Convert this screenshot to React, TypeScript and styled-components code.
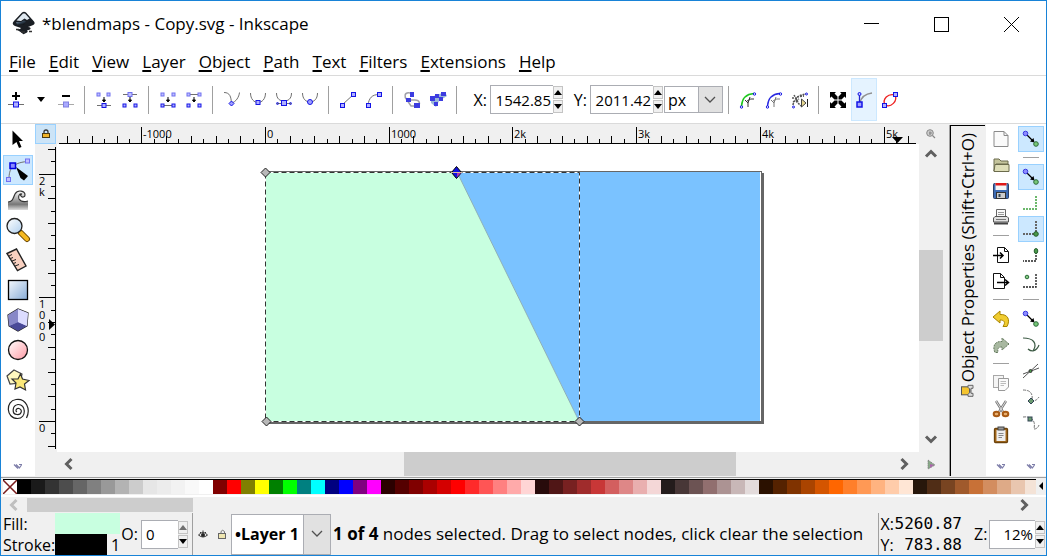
import React from "react";
import styled, { createGlobalStyle, css } from "styled-components";

const Global = createGlobalStyle`
  *, *::before, *::after { box-sizing: border-box; }
  html, body, #root { height: 100%; }
  body { margin: 0; overflow: hidden; background: #fff; color: #000; font: 17px/22px "Open Sans", "Noto Sans", sans-serif; }
  button, input, select { font: inherit; color: inherit; border-radius: 0; }
  button { padding: 0; border: 0; background: none; display: flex; align-items: center; justify-content: center; flex: none; }
  svg { display: block; flex: none; overflow: visible; }
`;

/* ---------- frame ---------- */
const Window = styled.div`
  min-height: 100vh;
  display: flex;
  flex-direction: column;
  border: 1px solid #1883d7;
  background: #fff;
`;
const Defs = styled.svg`
  position: absolute;
  width: 0;
  height: 0;
`;
const TitleBar = styled.header`
  display: flex;
  align-items: center;
  height: 46px;
  padding: 0 12px 0 11px;
`;
const Title = styled.h1`
  flex: 1;
  margin: 0 0 0 6px;
  font-size: 17px;
  font-weight: 400;
  white-space: nowrap;
`;
const WindowControl = styled.button`
  width: 46px;
  height: 30px;
  margin-left: 24px;
`;
const MenuBar = styled.nav`
  display: flex;
  align-items: center;
  gap: 13px;
  height: 28px;
  padding: 2px 8px 0;
`;
const MenuItem = styled.button`
  u { text-underline-offset: 2px; text-decoration-thickness: 2px; text-decoration-skip-ink: none; }
`;
const ToolBar = styled.div`
  display: flex;
  align-items: center;
  height: 49px;
  padding: 0 2px;
  border-top: 1px solid #dadada;
  border-bottom: 1px solid #dadada;
`;
const active = css`
  background: #cce8ff;
  box-shadow: inset 0 0 0 1px #99d1ff;
`;
const ToolButton = styled.button<{ $w?: number; $on?: boolean }>`
  width: ${(p) => p.$w ?? 26}px;
  height: 43px;
  ${(p) => p.$on && css`background: #e5f3ff; box-shadow: inset 0 0 0 1px #cce8ff;`}
`;
const Divider = styled.span`
  flex: none;
  width: 1px;
  height: 28px;
  margin: 0 6px 0 5px;
  background: #a0a0a0;
`;
const FieldLabel = styled.label<{ $w: number }>`
  width: ${(p) => p.$w}px;
  padding-right: 3px;
  text-align: right;
  font-size: 16px;
`;
const NumberField = styled.input<{ $w: number }>`
  width: ${(p) => p.$w}px;
  height: 29px;
  padding: 0 2px 0 4px;
  border: 1px solid #abadb3;
  border-right: 0;
  background: #fff;
  font-size: 15px;
  text-align: ${(p) => (p.$w > 40 ? "right" : "left")};
  outline: none;
`;
const Spin = styled.span`
  display: flex;
  flex-direction: column;
  gap: 1px;
  width: 10px;
  height: 27px;
  margin-right: 1px;
`;
const SpinButton = styled.button`
  flex: 1;
  width: 10px;
  background: #f0f0f0;
  border: 1px solid #c4c4c4;
`;
const SelectBox = styled.span<{ $w: number; $h: number; $arrow: number; $bold?: boolean }>`
  display: grid;
  grid-template-columns: 1fr ${(p) => p.$arrow}px;
  flex: none;
  width: ${(p) => p.$w}px;
  height: ${(p) => p.$h}px;
  border: 1px solid #abadb3;
  background: linear-gradient(90deg, #fff calc(100% - ${(p) => p.$arrow}px), #abadb3 0, #abadb3 calc(100% - ${(p) => p.$arrow - 1}px), #e1e1e1 0);
  align-items: center;
  select {
    grid-area: 1 / 1 / 2 / 3;
    width: 100%;
    height: 100%;
    padding: 0 0 0 3px;
    border: 0;
    background: none;
    appearance: none;
    outline: none;
    font-size: 16px;
    font-weight: ${(p) => (p.$bold ? 700 : 400)};
  }
  svg { grid-area: 1 / 2; justify-self: center; pointer-events: none; }
`;

/* ---------- work area ---------- */
const Work = styled.main`
  flex: 1;
  display: flex;
  min-height: 0;
  background: #f0f0f0;
`;
const ToolBox = styled.div`
  display: flex;
  flex-direction: column;
  align-items: center;
  width: 34px;
  margin-bottom: 1px;
  padding-top: 1px;
  background: #fff;
`;
const BoxButton = styled.button<{ $on?: boolean }>`
  width: 30px;
  height: 30px;
  ${(p) => p.$on && active}
`;
const More = styled.button`
  width: 24px;
  height: 20px;
  margin-top: auto;
  color: #7c7ca8;
`;
const Editor = styled.section`
  flex: 1;
  display: grid;
  grid-template: 20px minmax(0, 1fr) 25px / 22px minmax(0, 1fr) 24px;
  min-width: 0;
`;
const GuideLock = styled.button`
  width: 21px;
  background: #cce4f7;
  box-shadow: inset 0 0 0 1px #99d1ff;
`;
const Ruler = styled.svg`
  width: 100%;
  height: 100%;
  overflow: hidden;
  font: 11px "Open Sans", sans-serif;
`;
const Canvas = styled.svg`
  width: 100%;
  height: 100%;
  overflow: hidden;
  background: #fff;
`;
const ScrollBar = styled.div<{ $vertical?: boolean }>`
  display: flex;
  flex-direction: ${(p) => (p.$vertical ? "column" : "row")};
  align-items: stretch;
  color: #606060;
  padding: ${(p) => (p.$vertical ? "0 0 3px" : "0 3px 1px 0")};
`;
const ScrollArrow = styled.button<{ $h?: number }>`
  width: 24px;
  height: ${(p) => p.$h ?? 24}px;
  &:disabled { width: 26px; color: #bfbfbf; }
`;
const Track = styled.span<{ $grow: number }>`
  flex: ${(p) => p.$grow} 1 0;
`;
const Thumb = styled.span<{ $grow: number }>`
  flex: ${(p) => p.$grow} 1 0;
  background: #cdcdcd;
`;
const Corner = styled.button`
  width: 24px;
`;
const Dock = styled.aside`
  display: flex;
  flex-direction: column;
  align-items: center;
  width: 35px;
  margin: 1px 1px 1px 7px;
  padding-top: 7px;
  border-left: 1px solid #000;
  border-top: 1px solid #000;
  box-shadow: -1px 0 #a0a0a0;
`;
const DockTab = styled.button`
  flex-direction: row;
  gap: 2px;
  writing-mode: vertical-rl;
  transform: rotate(180deg);
  white-space: nowrap;
`;
const Side = styled.div`
  display: flex;
  flex-direction: column;
  align-items: center;
  width: 30px;
  padding-top: 2px;
  margin-bottom: 1px;
  background: #fff;
`;
const SideButton = styled.button<{ $on?: boolean }>`
  width: 26px;
  height: 26px;
  ${(p) => p.$on && active}
`;
const SideRule = styled.span`
  flex: none;
  width: 16px;
  height: 1px;
  margin: 5px 0 6px;
  background: #a0a0a0;
`;

/* ---------- bottom ---------- */
const Palette = styled.div`
  display: flex;
  align-items: center;
  height: 18px;
  padding: 0 0 1px 2px;
  border-top: 1px solid #a0a0a0;
  background: #f0f0f0;
`;
const Swatches = styled.div`
  flex: 1;
  display: flex;
  min-width: 0;
  overflow: hidden;
  border-top: 1px solid #000;
  margin-right: 2px;
`;
const Swatch = styled.button<{ $color: string }>`
  width: 14px;
  height: 14px;
  background: ${(p) => p.$color};
`;
const PaletteScroll = styled.div`
  display: flex;
  align-items: center;
  height: 18px;
  padding: 0 10px 0 0;
  border-top: 2px solid #fff;
  background: #f0f0f0;
  color: #606060;
`;
const PaletteThumb = styled.span`
  width: 16%;
  height: 14px;
  background: #cdcdcd;
`;
const StatusBar = styled.footer`
  display: flex;
  align-items: center;
  height: 42px;
  background: #f0f0f0;
`;
const StyleGrid = styled.div`
  display: grid;
  grid-template: 21px 21px / 52px 65px;
  align-items: center;
  padding-left: 2px;
  font-size: 16px;
  line-height: 20px;
`;
const FillChip = styled.button`
  align-self: stretch;
  background: #c8ffe0;
`;
const StrokeChip = styled.button`
  justify-content: flex-start;
  align-self: stretch;
  padding-left: 56px;
  background: linear-gradient(90deg, #000 52px, #f0f0f0 0);
`;
const StatusRule = styled.span`
  flex: none;
  align-self: stretch;
  width: 1px;
  margin-left: 3px;
  background: #a0a0a0;
`;
const SmallButton = styled.button`
  width: 19px;
  height: 24px;
`;
const Message = styled.p`
  flex: 1;
  margin: 0 0 0 2px;
  min-width: 0;
  white-space: nowrap;
  overflow: hidden;
`;
const Coords = styled.dl`
  display: grid;
  grid-template: 21px 21px / 14px auto;
  align-items: center;
  margin: 0 12px 0 2px;
  font-size: 16px;
  line-height: 20px;
  dd { margin: 0; text-align: right; font: 16px/20px "DejaVu Sans Mono", monospace; }
`;

/* ---------- icon pieces ---------- */
const B = "#1414e6";
const Sq = ({ x, y, s = 4, pale }: { x: number; y: number; s?: number; pale?: boolean }) => (
  <rect x={x - s / 2} y={y - s / 2} width={s} height={s} fill={pale ? "#c0c0ff" : "#b0b0ff"} stroke={pale ? "#7070f0" : B} />
);
const Ico = ({ children }: { children: React.ReactNode }) => (
  <svg width="22" height="22" viewBox="0 0 22 22" fill="none" aria-hidden="true">{children}</svg>
);
const Arrow = ({ up, color = "#000" }: { up?: boolean; color?: string }) => (
  <svg width="8" height="5" viewBox="0 0 8 5" aria-hidden="true"><path d={up ? "M0 5 4 0 8 5Z" : "M0 0 8 0 4 5Z"} fill={color} /></svg>
);
const Chevron = ({ d }: { d: "l" | "r" | "u" | "d" }) => (
  <svg width="14" height="14" viewBox="0 0 14 14" fill="none" stroke="currentColor" strokeWidth="3" aria-hidden="true">
    <path d={{ l: "M9.5 2 4.5 7 9.5 12", r: "M4.5 2 9.5 7 4.5 12", u: "M2 9.500 7 4.500 12 9.500", d: "M2 4.500 7 9.500 12 4.500" }[d]} />
  </svg>
);
const Drop = () => (
  <svg width="12" height="8" viewBox="0 0 12 8" fill="none" stroke="#505050" strokeWidth="1.300" aria-hidden="true"><path d="M1 1 6 6 11 1" /></svg>
);
const MoreIcon = () => (
  <svg width="8" height="5" viewBox="0 0 8 5" fill="none" stroke="currentColor" strokeWidth="1.200" aria-hidden="true"><path d="M0 0.500 4 4.500M2 0.500 5 3.500M5 0.500H8M7.500 1 5 4.500" /></svg>
);
const Spinner = ({ name, top }: { name: string; top?: string }) => (
  <Spin>
    <SpinButton aria-label={`Increase ${name}`}><Arrow up color={top} /></SpinButton>
    <SpinButton aria-label={`Decrease ${name}`}><Arrow /></SpinButton>
  </Spin>
);

const G = "#707070";
const down = <path d="M11 8V11M9.500 11H12.500L11 13Z" stroke="#000" fill="#000" strokeWidth="1" />;
const icons: Record<string, React.ReactNode> = {
  insert: <><path d="M3 15.500H19" stroke={G} /><path d="M11 3V11M7 7H15" stroke="#000" strokeWidth="2" /><Sq x={11} y={15.5} s={5} /></>,
  remove: <><path d="M3 15.500H19" stroke="#aaa" /><path d="M7 7H15" stroke="#000" strokeWidth="2" /><rect x="8.500" y="13" width="5" height="5" fill="#aaf" stroke="#8080e0" /></>,
  join: <><path d="M4 16.500H18" stroke={G} /><Sq x={5.5} y={5.5} s={3} pale /><Sq x={15.5} y={5.5} s={3} pale />{down}<Sq x={11} y={16.5} /></>,
  brk: <><path d="M4 5.500H18" stroke={G} /><Sq x={11} y={5.5} pale />{down}<Sq x={5.5} y={16.5} s={3} /><Sq x={16.5} y={16.5} s={3} /></>,
  joinSeg: <><Sq x={5.5} y={5.5} s={3} pale /><Sq x={16.5} y={5.5} s={3} pale />{down}<path d="M6 16.500H16" stroke={G} /><Sq x={5.5} y={16.5} s={3} /><Sq x={16.5} y={16.5} s={3} /></>,
  delSeg: <><path d="M6 5.500H16" stroke={G} /><Sq x={5.5} y={5.5} s={3} pale /><Sq x={16.5} y={5.5} s={3} pale />{down}<Sq x={5.5} y={16.5} s={3} /><Sq x={16.5} y={16.5} s={3} /></>,
  cusp: <><path d="M3 3.500C9 3.500 10 8 10.500 14C15 13 18 8 18.500 3.500" stroke={G} /><path d="M10.500 12 13 14.500 10.500 17 8 14.500Z" fill="#a0a0ff" stroke={B} /></>,
  smooth: <><path d="M3.500 4C3.500 10 7 13.500 11 13.500S18.500 10 18.500 4" stroke={G} /><Sq x={11} y={13.5} /></>,
  symm: <><path d="M3.500 4C3.500 10 7 12 11 12S18.500 10 18.500 4M4 14.500H18" stroke={G} /><Sq x={11} y={14} s={5} /><circle cx="4.500" cy="14.500" r="1" stroke={B} /><circle cx="17.500" cy="14.500" r="1" stroke={B} /></>,
  auto: <><path d="M3.500 4C3.500 10 7 13 11 13S18.500 10 18.500 4" stroke={G} /><circle cx="11" cy="13" r="2.500" fill="#a0a0ff" stroke={B} /></>,
  line: <><path d="M5 16 17 5" stroke={G} /><Sq x={5.5} y={16.5} /><Sq x={16.5} y={5.5} /></>,
  curve: <><path d="M5 16C6 9 9 5.500 16 5.500" stroke={G} /><Sq x={5.5} y={16.5} /><Sq x={16.5} y={5.5} /></>,
  objPath: <><path d="M9 4C3 3 3 8 6 11L10 17H16C20 16 19 11 14 11H9" stroke="#a0a0a8" strokeWidth="1.500" /><path d="M9 3H13V8H9ZM5 9H10V13H5ZM13 14H19V19H13Z" fill="#3c3ce0" /></>,
  strokePath: <><path d="M4 8 18 3 20 7 12 12 9 18 4 14Z" fill="#9ab8d8" /><path d="M3 7H8V12H3ZM8 5H12V9H8ZM14 3H19V7H14ZM7 13H11V17H7ZM12 8H16V12H12Z" fill="#3c3ce0" /></>,
  lpeEdit: <><path d="M4.500 17C5 10 9 5 17 4.500" stroke="#1ec81e" strokeWidth="1.600" /><path d="M8 11 11 14V18M11 14 13 8M10 12Q14 9 17 10" stroke="#333" /><circle cx="4.500" cy="18" r="1.200" stroke={B} /><circle cx="17.500" cy="5" r="1.200" stroke={B} /></>,
  mask: <><path d="M4.500 17C5 10 9 5 17 4.500" stroke="#2a2ae0" strokeWidth="1.400" /><path d="M8 11 11 14V18M11 14 13 8M10 12Q14 9 17 10" stroke="#777" /><circle cx="4.500" cy="18" r="1.200" stroke={B} /><circle cx="17.500" cy="5" r="1.200" stroke={B} /></>,
  lpe: <><path d="M4 16C5 10 9 6 17 5M3 9H9M5 6 9 13M8 8 15 7M7 12 12 17M4 13 10 10" stroke="#555" strokeDasharray="2 1" strokeWidth="1.500" /><path d="M12.500 10 17 14 12.500 18Z" fill="#e8d890" stroke="#444" /><path d="M18.500 10V18" stroke="#222" /><circle cx="4.500" cy="18" r="1" stroke={B} /><circle cx="17.500" cy="5" r="1" stroke={B} /></>,
  transform: <path d="M3 3H9L7.500 4.500 10.500 7.500V10.500H7.500L4.500 7.500 3 9ZM19 3H13L14.500 4.500 11.500 7.500V10.500H14.500L17.500 7.500 19 9ZM3 19H9L7.500 17.500 10.500 14.500V11.500H7.500L4.500 14.500 3 13ZM19 19H13L14.500 17.500 11.500 14.500V11.500H14.500L17.500 14.500 19 13Z" fill="#000" />,
  handles: <><path d="M7 14C8 9 11 5 19 4" stroke="#909090" strokeWidth="1.300" /><path d="M6.500 6V13" stroke="#2222cc" strokeWidth="1.300" /><circle cx="6.500" cy="5" r="1.500" stroke={B} fill="#c0c0ff" /><rect x="4" y="13" width="5" height="5" fill="#a0a0ff" stroke={B} strokeWidth="1.500" /></>,
  outline: <><path d="M6 16C3 10 9 4 16 6C19 12 12 19 6 16Z" stroke="#e22" strokeWidth="1.300" /><Sq x={5.5} y={16.5} /><Sq x={16.5} y={5.5} /></>,

  select: <path d="M5.500 1.500V16L9.500 13 12 19 14.500 18 12 12H16Z" fill="#000" />,
  node: <><path d="M2 20C2 10 5 4 20 2.500" stroke={G} /><path d="M9 8 21 17 17 21.500 13.500 19Z" fill="#000" /><rect x="3" y="4" width="5.500" height="5.500" fill="#8a8aff" stroke="#0000e0" strokeWidth="1.500" /><Sq x={1.5} y={20.5} pale /><Sq x={20.5} y={2} pale /></>,
  tweak: <><path d="M1 13C6 13 6 9 8 5C11 0 18 2 18 6C18 8 15 9 14 7C13 6 14 5 15 5C12 4 11 8 12 10C14 13 18 13 21 12V21H1Z" fill="url(#wave)" /><path d="M1 13C6 13 6 9 8 5C11 0 18 2 18 6C18 8 15 9 14 7C13 6 14 5 15 5C12 4 11 8 12 10C14 13 18 13 21 12" stroke="#333" strokeWidth="1.200" /></>,
  zoom: <><path d="M14 14 20 20" stroke="#6a4600" strokeWidth="6" strokeLinecap="round" /><path d="M14 14 20 20" stroke="#f5b820" strokeWidth="4" strokeLinecap="round" /><circle cx="7.500" cy="7" r="7.500" fill="url(#glass)" stroke="#222" strokeWidth="1.300" /></>,
  measure: <><path d="M0 4.500 9.500 0 19 17 10.500 21.500Z" fill="#f8d0c0" stroke="#222" strokeWidth="1.400" /><path d="M2 7 5 5.500M3.500 9.500 6 8.500M5 12 9 10.500M6.500 14.500 9 13.500M8 17 12 15.500" stroke="#222" /></>,
  rect: <rect x="1.500" y="1.500" width="19" height="19" fill="url(#blue)" stroke="#000" strokeWidth="1.300" />,
  box: <><path d="M1 6 11 0 21 4 20 17 11 22 2 17Z" fill="#c8c8f4" stroke="#222" strokeWidth="1.200" /><path d="M1 6 11 0V13L2 17Z" fill="#8888c8" /><path d="M2 17 11 13 20 17 11 22Z" fill="#4a4a98" /><path d="M11 0 21 4 20 17 11 13Z" fill="#dcdcff" /></>,
  ellipse: <circle cx="11" cy="11" r="9.500" fill="url(#pink)" stroke="#111" strokeWidth="1.300" />,
  star: <><path d="M7 1 15 5 13 14 3 15 0 7Z" fill="#fff8c0" stroke="#444" strokeWidth="1.200" /><path d="M13.500 5 15.500 10 22 11.500 17.500 15 18.500 21 13 18 8 20 9 14 5 10 11 10Z" fill="#fbe878" stroke="#333" strokeWidth="1.200" /></>,
  spiral: <path d="M10 13C8 12 9 9 12 9.500C16 10.500 14.500 16 10 15.500C4.500 15 5 6.500 11 5.500C19 5 20 19 10.500 19.500C-1 19.500 -2 2 9 0.500C19 -1 24 10 19.500 19" stroke="#222" strokeWidth="1.200" />,

  newDoc: <><path d="M4 3.500H14L18 7.500V18.500H4Z" fill="#fafafa" stroke="#8a8a8a" /><path d="M14 3.500V7.500H18" stroke="#8a8a8a" /></>,
  open: <><path d="M4 17V5H9L11 7H18V10H6Z" fill="#c4c49c" stroke="#6b6b4c" /><path d="M5 10.500H19V17.500H4Z" fill="#dedeb8" stroke="#6b6b4c" /></>,
  save: <><rect x="3.500" y="3.500" width="15" height="15" rx="1" fill="#3d6bb3" stroke="#2a3f66" /><path d="M5.500 3H16.500V10H5.500Z" fill="#f5f5f5" /><path d="M5.500 3H16.500V5.500H5.500Z" fill="#e01818" /><rect x="6.500" y="12.500" width="9" height="6" fill="#ccc" stroke="#333" /><path d="M8.500 14V17H10.500V14Z" fill="#345" /></>,
  print: <><path d="M6.500 11V3.500H15.500V11" fill="#fafafa" stroke="#666" /><path d="M8 6.500H14M8 8.500H14" stroke="#999" /><path d="M3.500 16V12L5 10.500H17L18.500 12V16Z" fill="#e0e0e0" stroke="#555" /><path d="M4 17.500H18" stroke="#444" strokeWidth="2" /><path d="M6 13.500H16" stroke="#777" /></>,
  imp: <><path d="M7.500 3.500H14.500L18.500 7.500V18.500H7.500Z" fill="#fff" stroke="#111" /><path d="M14.500 3.500V7.500H18" stroke="#111" /><path d="M3 11.500H13M10 8.500 13 11.500 10 14.500" stroke="#000" strokeWidth="1.500" /></>,
  exp: <><path d="M3.500 3.500H10.500L14.500 7.500V18.500H3.500Z" fill="#fff" stroke="#111" /><path d="M10.500 3.500V7.500H14" stroke="#111" /><path d="M7 12.500H18M15 9.500 18.500 12.500 15 15.500" stroke="#000" strokeWidth="1.500" /></>,
  undo: <path d="M3 9 10 3V6.500C18 6 20.500 12 17 18.500H13C16 14 14 12 10 12V15Z" fill="#f0cc30" stroke="#a88400" />,
  redo: <path d="M19 10 12 4V7.500C5 7 2 12 5 18.500H8C7 14 9 13 12 13V16Z" fill="#a8b8a0" stroke="#63785c" strokeDasharray="2 1" />,
  copy: <><rect x="3.500" y="3.500" width="10" height="12" fill="#f5f5f5" stroke="#a8a8a8" /><path d="M8.500 6.500H18.500V15L15 18.500H8.500Z" fill="#fafafa" stroke="#999" /><path d="M10.500 9.500H16M10.500 11.500H16M10.500 13.500H14" stroke="#bbb" /></>,
  cut: <><path d="M6 3 13 14M16 3 9 14" stroke="#777" strokeWidth="2.400" /><path d="M6 3 13 14M16 3 9 14" stroke="#ddd" /><ellipse cx="6.500" cy="16" rx="2.800" ry="2.300" fill="#e8b070" stroke="#a85a14" strokeWidth="2" /><ellipse cx="15.500" cy="16" rx="2.800" ry="2.300" fill="#e8b070" stroke="#a85a14" strokeWidth="2" /></>,
  paste: <><rect x="4.500" y="4.500" width="13" height="14" rx="1" fill="#a86c1e" stroke="#6c430c" strokeWidth="1.300" /><path d="M6.500 6H15.500V17H6.500Z" fill="#eee" /><rect x="8" y="3" width="6" height="3" fill="#999" stroke="#444" /><path d="M8.500 9.500H13.500M8.500 11.500H13.500M8.500 13.500H12" stroke="#888" /></>,

  snap: <><path d="M7 7 13 13" stroke="#000" strokeWidth="1.300" /><path d="M14.500 14.500 10 13.500 13.500 10Z" fill="#000" /><circle cx="5.500" cy="5.500" r="2.300" fill="#8c8cff" stroke="#3a3ae0" /><circle cx="16" cy="16" r="2.300" fill="#78c878" stroke="#2c6a3a" /></>,
  bbox: <path d="M16 4V17H3" stroke="#6cb86c" strokeWidth="2" strokeDasharray="2 1" />,
  corner: <><path d="M16 3V16H3" stroke="#666" strokeWidth="2" strokeDasharray="2 1" /><circle cx="16" cy="16" r="2.300" fill="#4a9a4a" stroke="#245c2c" /></>,
  mid: <><path d="M16 5V17H3" stroke="#222" strokeWidth="1.400" strokeDasharray="2 1" /><ellipse cx="16" cy="7" rx="1.800" ry="2.500" fill="#4a9a4a" stroke="#245c2c" /></>,
  center: <><path d="M16 4V17H3" stroke="#222" strokeWidth="1.400" strokeDasharray="2 1" /><circle cx="7" cy="7" r="1.800" fill="#8c8" stroke="#286a35" /></>,
  path: <path d="M3 4C13 4 18 9 13 17C11 17 9 16 8 15M13 17C16 16 18 14 19 11" stroke="#3c5a44" strokeWidth="1.200" />,
  cross: <><path d="M3 18 18 4M3 14 19 8" stroke="#555" /><circle cx="10.500" cy="11" r="1.500" fill="#4a9a4a" stroke="#333" /></>,
  nodeCusp: <><path d="M3 4C11 4 13 8 12 15C15 15 17 14 19 11" stroke="#777" strokeDasharray="3 1" /><path d="M11 12 14 15 11 18 8 15Z" fill="#6a9a70" stroke="#345" /></>,
  nodeSmooth: <><path d="M3 5C11 4 16 8 14 17C16 17 18 16 19 13" stroke="#777" strokeDasharray="3 1" /><rect x="8" y="5" width="4" height="4" fill="#6a9a70" stroke="#345" /></>,
};

const toolRow: (string | 0 | 1)[] = ["insert", 1, "remove", 0, "join", "brk", 0, "joinSeg", "delSeg", 0, "cusp", "smooth", "symm", "auto", 0, "line", "curve", 0, "objPath", "strokePath", 0];
const toolRow2: (string | 0)[] = [0, "lpeEdit", "mask", "lpe", 0, "transform", "handles", "outline"];
const boxRow = ["select", "node", "tweak", "zoom", "measure", "rect", "box", "ellipse", "star", "spiral"];
const cmdRow = ["newDoc", "open", "save", "print", 0, "imp", "exp", 0, "undo", "redo", 0, "copy", "cut", "paste"];
const snapRow: [string, boolean][] = [["snap", true], ["", false], ["snap", true], ["bbox", false], ["corner", true], ["mid", false], ["center", false], ["", false], ["snap", false], ["path", false], ["cross", false], ["nodeCusp", false], ["nodeSmooth", false]];
const menus = ["File", "Edit", "View", "Layer", "Object", "Path", "Text", "Filters", "Extensions", "Help"];

const colors = (
  "000000 1a1a1a 333333 4d4d4d 666666 808080 999999 b3b3b3 cccccc e6e6e6 ececec f2f2f2 f9f9f9 ffffff " +
  "800000 ff0000 808000 ffff00 008000 00ff00 008080 00ffff 000080 0000ff 800080 ff00ff " +
  "2b0000 550000 800000 aa0000 d40000 ff0000 ff2a2a ff5555 ff8080 ffaaaa ffd5d5 " +
  "280b0b 501616 782121 a02c2c c83737 d35f5f de8787 e9afaf f4d7d7 " +
  "241c1c 483737 6c5353 916f6f ac9393 c8b7b7 e3dbdb " +
  "2b1100 552200 803300 aa4400 d45500 ff6600 ff7f2a ff9955 ffb380 ffccaa ffe6d5 " +
  "28170b 502d16 784421 a05a2c c87137 d38d5f deaa87 e9c6af f4e3d7"
).split(" ");

/* One tick is a tenth of 1000 user units. */
const STEP = 12.37;
const ORIGIN_X = 208;
const ORIGIN_Y = 277;

function HorizontalRuler() {
  const ticks = [];
  for (let i = -16; i <= 52; i++) {
    const x = Math.round(ORIGIN_X + i * STEP) + 0.5;
    const top = i % 10 === 0 ? 3 : i % 2 === 0 ? 12 : 15;
    ticks.push(<path key={i} d={`M${x} ${top}V19`} />);
  }
  const labels: [number, string][] = [[-10, "-1000"], [0, "0"], [10, "1000"], [20, "2k"], [30, "3k"], [40, "4k"], [50, "5k"]];
  return (
    <Ruler aria-label="Horizontal ruler">
      <g stroke="#000">{ticks}<path d="M2 19.500H859" /></g>
      {labels.map(([i, t]) => <text key={t} x={Math.round(ORIGIN_X + i * STEP) + 2} y="14">{t}</text>)}
      <path d="M835 13H846L840.500 19Z" fill="#000" />
    </Ruler>
  );
}

function VerticalRuler() {
  const ticks = [];
  for (let i = -2; i <= 22; i++) {
    const y = Math.round(ORIGIN_Y - i * STEP) + 0.5;
    const left = i % 10 === 0 ? 4 : i % 2 === 0 ? 13 : 16;
    ticks.push(<path key={i} d={`M${left} ${y}H20`} />);
  }
  const labels: [string, number][] = [["2k", 41], ["1000", 164], ["0", 288]];
  return (
    <Ruler aria-label="Vertical ruler">
      <g stroke="#000">{ticks}<path d="M20.500 3V305" /></g>
      {labels.map(([t, y]) => (
        <text key={t}>{t.split("").map((c, i) => <tspan key={i} x="4" y={y + i * 11}>{c}</tspan>)}</text>
      ))}
      <path d="M14 175V186L20 180.500Z" fill="#000" />
    </Ruler>
  );
}

function Drawing() {
  return (
    <Canvas aria-label="Drawing canvas">
      <path d="M705 29H707V280H211V277H705Z" fill="#666" />
      <rect x="208.500" y="27.500" width="496" height="250" fill="#fff" stroke="#666" />
      <path d="M399 28H703V277H522Z" fill="#7ac2ff" />
      <path d="M209 28H400L522 277H209Z" fill="#c8ffe0" />
      <path d="M400 28 522 277" stroke="#8fb0b8" />
      <path d="M208.500 28.500H522.500V277.500H208.500Z" fill="none" stroke="#fff" />
      <path d="M208.500 28.500H522.500V277.500H208.500Z" fill="none" stroke="#333" strokeDasharray="5 3" />
      <g fill="#b8b8b8" stroke="#222">
        <path d="M208.500 24 213 28.500 208.500 33 204 28.500Z" />
        <path d="M209.500 273 214 277.500 209.500 282 205 277.500Z" />
        <path d="M522.500 273 527 277.500 522.500 282 518 277.500Z" />
      </g>
      <path d="M399.500 22.500 404.500 28.500 399.500 34.500 394.500 28.500Z" fill="#1010e0" stroke="#000" />
      <path d="M394 28.500H405" stroke="#d8b8a0" />
      <path d="M400 29H404L400 33Z" fill="#b030b0" />
    </Canvas>
  );
}

export default function App() {
  return (
    <Window>
      <Global />
      <Defs aria-hidden="true">
        <defs>
          <linearGradient id="wave" x2="0" y2="1"><stop stopColor="#fff" /><stop offset=".7" stopColor="#777" /><stop offset="1" stopColor="#ddd" /></linearGradient>
          <linearGradient id="glass" x2="1" y2="1"><stop stopColor="#fff" /><stop offset="1" stopColor="#b0d0ee" /></linearGradient>
          <linearGradient id="blue" x2="1" y2="1"><stop stopColor="#f4f8fc" /><stop offset="1" stopColor="#88acd6" /></linearGradient>
          <linearGradient id="pink" x2="1" y2="1"><stop stopColor="#fff" /><stop offset="1" stopColor="#ff9aa4" /></linearGradient>
          <linearGradient id="ink" x2="1" y2="1"><stop stopColor="#9ab" /><stop offset=".5" stopColor="#345" /><stop offset="1" stopColor="#000" /></linearGradient>
        </defs>
      </Defs>
      <TitleBar>
        <svg width="24" height="24" viewBox="0 0 24 24" aria-hidden="true">
          <path d="M10 0.500Q12 -1 14 0.500L22 9.500Q24 12 20 13.500L16 15Q20 15.500 18 17.500L15 18.500Q17 20 13 21.500Q11 23 10 21L7 19Q3 17.500 8 17L9 16 3 14Q-1 12 2 9Z" fill="#1a1e24" />
          <path d="M11 1.500H13L17.500 6.500 15 8 12.500 6.500 9 9 4.500 8.500Z" fill="#dfe8f0" />
          <path d="M4 10 9 10 12 8.500 14 9.500 12 12.500 5 12.500Z" fill="url(#ink)" />
          <path d="M4 17.500 7 17.500M17 19.500H20M9 20H13" stroke="#333" strokeWidth="1.500" />
        </svg>
        <Title>*blendmaps - Copy.svg - Inkscape</Title>
        <WindowControl aria-label="Minimize"><svg width="15" height="15" viewBox="0 0 15 15" stroke="#000"><path d="M0 6.500H15" /></svg></WindowControl>
        <WindowControl aria-label="Maximize"><svg width="15" height="15" viewBox="0 0 15 15" stroke="#000" fill="none"><rect x="0.500" y="0.500" width="14" height="14" /></svg></WindowControl>
        <WindowControl aria-label="Close"><svg width="15" height="15" viewBox="0 0 15 15" stroke="#000"><path d="M0 0 15 15M15 0 0 15" /></svg></WindowControl>
      </TitleBar>
      <MenuBar>
        {menus.map((m) => <MenuItem key={m}><span><u>{m[0]}</u>{m.slice(1)}</span></MenuItem>)}
      </MenuBar>
      <ToolBar role="toolbar">
        {toolRow.map((t, i) =>
          t === 0 ? <Divider key={i} /> : t === 1 ? <ToolButton key={i} $w={24} aria-label="More insert options"><Arrow /></ToolButton> : <ToolButton key={i} aria-label={t}><Ico>{icons[t]}</Ico></ToolButton>
        )}
        <FieldLabel $w={27} htmlFor="x">X:</FieldLabel>
        <NumberField id="x" $w={63} defaultValue="1542.85" />
        <Spinner name="X" />
        <FieldLabel $w={26} htmlFor="y">Y:</FieldLabel>
        <NumberField id="y" $w={63} defaultValue="2011.42" />
        <Spinner name="Y" />
        <SelectBox $w={59} $h={27} $arrow={24}>
          <select aria-label="Units" defaultValue="px"><option>px</option><option>mm</option></select>
          <Drop />
        </SelectBox>
        {toolRow2.map((t, i) => (t === 0 ? <Divider key={i} /> : <ToolButton key={i} aria-label={t} $on={t === "handles"}><Ico>{icons[t]}</Ico></ToolButton>))}
      </ToolBar>

      <Work>
        <ToolBox>
          {boxRow.map((t) => <BoxButton key={t} aria-label={t} $on={t === "node"}><Ico>{icons[t]}</Ico></BoxButton>)}
          <More aria-label="More tools"><MoreIcon /></More>
        </ToolBox>
        <Editor>
          <GuideLock aria-label="Lock guides">
            <svg width="8" height="10" viewBox="0 0 8 10"><path d="M2 5V3Q2 1 4 1T6 3V5" fill="none" stroke="#333" strokeWidth="1.300" /><rect x="0.500" y="4.500" width="7" height="4" fill="#f0b429" stroke="#4a3a10" /></svg>
          </GuideLock>
          <HorizontalRuler />
          <Corner aria-label="Zoom with window"><svg width="10" height="10" viewBox="0 0 10 10" fill="none" stroke="#888"><circle cx="4" cy="4" r="3.300" fill="#ccc" /><path d="M3 4H6M4 2.500V6M6.500 6.500 9 9" strokeWidth="1.200" /></svg></Corner>
          <VerticalRuler />
          <Drawing />
          <ScrollBar $vertical>
            <ScrollArrow $h={20} aria-label="Scroll up"><Chevron d="u" /></ScrollArrow>
            <Track $grow={86} /><Thumb $grow={91} /><Track $grow={88} />
            <ScrollArrow $h={20} aria-label="Scroll down"><Chevron d="d" /></ScrollArrow>
          </ScrollBar>
          <span />
          <ScrollBar>
            <ScrollArrow aria-label="Scroll left"><Chevron d="l" /></ScrollArrow>
            <Track $grow={323} /><Thumb $grow={332} /><Track $grow={156} />
            <ScrollArrow aria-label="Scroll right"><Chevron d="r" /></ScrollArrow>
          </ScrollBar>
          <Corner aria-label="Color management"><svg width="8" height="9" viewBox="0 0 8 9"><path d="M1 0 8 5 1 9Z" fill="#8a8" /><path d="M1 0 8 5 1 9Z" fill="none" stroke="#777" strokeDasharray="1 1" /><path d="M3 4 7 5 3 8Z" fill="#a6a" /></svg></Corner>
        </Editor>
        <Dock>
          <DockTab>
            <svg width="13" height="14" viewBox="0 0 13 14"><rect x="4.500" y="3.500" width="8" height="8" fill="#f4c430" stroke="#555" /><path d="M1 2H6V4L4 6V9L6 11V13H1V10H3V5H1Z" fill="#ddd" stroke="#666" /></svg>
            Object Properties (Shift+Ctrl+O)
          </DockTab>
        </Dock>
        <Side>
          {cmdRow.map((t, i) => (t === 0 ? <SideRule key={i} /> : <SideButton key={i} aria-label={String(t)}><Ico>{icons[t as string]}</Ico></SideButton>))}
          <More aria-label="More commands"><MoreIcon /></More>
        </Side>
        <Side>
          {snapRow.map(([t, on], i) => (!t ? <SideRule key={i} /> : <SideButton key={i} $on={on} aria-label={t}><Ico>{icons[t]}</Ico></SideButton>))}
          <More aria-label="More snapping"><MoreIcon /></More>
        </Side>
      </Work>

      <Palette>
        <Swatches>
          <Swatch $color="#fff" aria-label="None"><svg width="14" height="14" viewBox="0 0 14 14" stroke="#7a1c1c" strokeWidth="1.500"><path d="M0 0 14 14M14 0 0 14" /></svg></Swatch>
          {colors.map((c, i) => <Swatch key={i} $color={`#${c}`} aria-label={`#${c}`} />)}
        </Swatches>
        <svg width="8" height="8" viewBox="0 0 8 8"><path d="M5 0V8L1 4Z" fill="#000" /></svg>
      </Palette>
      <PaletteScroll>
        <ScrollArrow $h={16} aria-label="Scroll palette left" disabled><Chevron d="l" /></ScrollArrow>
        <PaletteThumb />
        <Track $grow={1} />
        <ScrollArrow $h={16} aria-label="Scroll palette right"><Chevron d="r" /></ScrollArrow>
      </PaletteScroll>
      <StatusBar>
        <StyleGrid>
          <span>Fill:</span><FillChip aria-label="Fill colour" />
          <span>Stroke:</span><StrokeChip aria-label="Stroke colour">1</StrokeChip>
        </StyleGrid>
        <FieldLabel $w={21} htmlFor="o">O:</FieldLabel>
        <NumberField id="o" $w={37} defaultValue="0" />
        <Spinner name="opacity" top="#707070" />
        <StatusRule />
        <SmallButton aria-label="Toggle layer visibility"><svg width="10" height="9" viewBox="0 0 10 9" fill="none" stroke="#333"><path d="M0.500 5Q5 0 9.500 5Q5 9 0.500 5ZM2 2 3 3M5 0.500V2M8 2 7 3" /><circle cx="5" cy="5" r="1.500" fill="#222" /></svg></SmallButton>
        <SmallButton aria-label="Lock layer"><svg width="8" height="10" viewBox="0 0 8 10"><path d="M3 5V2.500Q4.500 0 6.500 2.500V5" fill="none" stroke="#777" /><rect x="0.500" y="4.500" width="7" height="5" fill="#efe6b0" stroke="#666" /></svg></SmallButton>
        <SelectBox $w={100} $h={41} $arrow={27} $bold>
          <select aria-label="Layer" defaultValue="•Layer 1"><option>•Layer 1</option></select>
          <Drop />
        </SelectBox>
        <Message><b>1 of 4</b> nodes selected. Drag to select nodes, click clear the selection</Message>
        <StatusRule />
        <Coords><dt>X:</dt><dd>5260.87</dd><dt>Y:</dt><dd>783.88</dd></Coords>
        <FieldLabel $w={15} htmlFor="z">Z:</FieldLabel>
        <NumberField id="z" $w={46} defaultValue="12%" />
        <Spinner name="zoom" />
      </StatusBar>
    </Window>
  );
}
